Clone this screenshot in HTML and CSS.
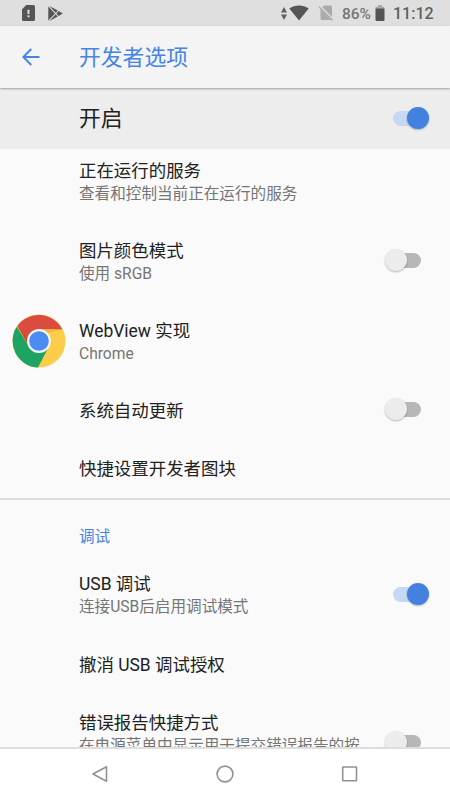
FILE: index.html
```html
<!DOCTYPE html>
<html lang="zh-CN">
<head>
<meta charset="utf-8">
<title>开发者选项</title>
<link rel="stylesheet" href="styles.css">
</head>
<body>
<div class="screen">
  <div class="statusbar">
    <svg class="sd" width="13" height="16" viewBox="0 0 13 16"><path fill="#555" fill-rule="evenodd" d="M4.3 0H11.5Q13 0 13 1.5V14.5Q13 16 11.5 16H1.5Q0 16 0 14.5V4.3ZM5.5 4.8V9H7.5V4.8ZM5.5 10.3V12.2H7.5V10.3Z"/></svg>
    <svg class="play" width="15" height="15" viewBox="0 0 15 15"><path fill="#555" d="M.3.4V14.6L7 7.5ZM1.3 0 7.7 6.8 9.8 4.6ZM1.3 15 7.7 8.2 9.8 10.4ZM10.6 5.1 8.4 7.5 10.6 9.9 14.8 7.5Z"/></svg>
    <span class="grow"></span>
    <svg class="updown" width="6" height="13" viewBox="0 0 6 13"><path fill="#606060" d="M3 0 6 5.5H0ZM3 13 6 7.5H0Z"/></svg>
    <svg class="wifi" width="20" height="16" viewBox="0 0 20 16"><path fill="#555" d="M10 15.5.3 3.5C5.5-.6 14.5-.6 19.7 3.5Z"/></svg>
    <svg class="nosim" width="16" height="16" viewBox="0 0 16 16"><path fill="#aaa" d="M6 .5H12.5Q14 .5 14 2V12L4.3 2.3ZM2.5 4.5 13.1 15H4Q2.5 15 2.5 13.5Z"/><path d="M1 1.7 14.5 15.3" stroke="#aaa" stroke-width="1.4"/></svg>
    <span class="pct">86%</span>
    <svg class="battery" width="10" height="16" viewBox="0 0 10 16"><path fill="#aaa" d="M3 0H7V1.8H9.2V4H.5V1.8H3Z"/><path fill="#555" d="M.5 3.5H9.5V15Q9.5 16 8.5 16H1.5Q.5 16 .5 15Z"/></svg>
    <span class="clock">11:12</span>
  </div>

  <header class="appbar">
    <svg class="back" width="18" height="18" viewBox="0 0 18 18"><path d="M17.5 9H1.6M9.3 1 1.3 9 9.3 17" fill="none" stroke="#4584e4" stroke-width="1.9"/></svg>
    <h1>开发者选项</h1>
  </header>

  <main class="content">
    <div class="master"><span>开启</span><i class="switch on"></i></div>

    <div class="row first"><div class="text"><div class="title">正在运行的服务</div><div class="summary">查看和控制当前正在运行的服务</div></div></div>
    <div class="row"><div class="text"><div class="title">图片颜色模式</div><div class="summary">使用 sRGB</div></div><i class="switch"></i></div>
    <div class="row webview">
      <svg class="chrome" width="54" height="54" viewBox="0 0 54 54">
        <circle cx="27" cy="27" r="26.5" fill="#fccd48"/>
        <path fill="#1da362" d="M27 27 17.2 32.7 4.7 12.8A26.5 26.5 0 0 0 26 53.5L36.8 32.7Z"/>
        <path fill="#db4b3f" d="M5.3 12A26.5 26.5 0 0 1 50.3 15.3H27L17.2 32.7Z"/>
        <path fill="#b83a31" opacity=".25" d="M5.3 12 17.2 32.7 15 24Z"/>
        <path fill="#d99b24" opacity=".35" d="M27 15.3H50.3L36 19Z"/>
        <circle cx="27" cy="27" r="12" fill="#f3f3f3"/>
        <circle cx="27" cy="27" r="9.8" fill="#4b8bf2"/>
      </svg>
      <div class="text"><div class="title">WebView 实现</div><div class="summary">Chrome</div></div>
    </div>
    <div class="row single"><div class="text"><div class="title">系统自动更新</div></div><i class="switch"></i></div>
    <div class="row single"><div class="text"><div class="title">快捷设置开发者图块</div></div></div>

    <div class="category">调试</div>
    <div class="row usb"><div class="text"><div class="title">USB 调试</div><div class="summary">连接USB后启用调试模式</div></div><i class="switch on"></i></div>
    <div class="row single"><div class="text"><div class="title">撤消 USB 调试授权</div></div></div>
    <div class="row last"><div class="text"><div class="title">错误报告快捷方式</div><div class="summary">在电源菜单中显示用于提交错误报告的按</div></div><i class="switch"></i></div>
  </main>

  <nav class="navbar">
    <svg width="18" height="18" viewBox="0 0 18 18"><path d="M15.5 1.7V16.3L2 9Z" fill="none" stroke="#929292" stroke-width="1.6" stroke-linejoin="round"/></svg>
    <svg width="18" height="18" viewBox="0 0 18 18"><circle cx="9" cy="9" r="7.9" fill="none" stroke="#929292" stroke-width="1.6"/></svg>
    <svg width="18" height="18" viewBox="0 0 18 18"><rect x="1.7" y="2" width="13.8" height="13.8" rx=".5" fill="none" stroke="#929292" stroke-width="1.6"/></svg>
  </nav>
</div>
</body>
</html>
```
FILE: styles.css
```css
* { box-sizing: border-box; }

body {
  margin: 0;
  font-family: Roboto, "Noto Sans CJK SC", sans-serif;
  color: #212121;
}

.screen {
  width: 450px;
  height: 800px;
  display: flex;
  flex-direction: column;
  overflow: hidden;
  background: #fafafa;
}

.statusbar {
  flex: none;
  height: 26px;
  padding: 0 18px 0 22px;
  display: flex;
  align-items: center;
  background: #dfdfdf;
  color: #606060;
  font-size: 16px;
  font-weight: 500;
  line-height: 26px;
}
.statusbar svg { flex: none; }
.play { margin-left: 13px; }
.grow { flex: 1; }
.wifi { margin-left: 2px; }
.nosim { margin-left: 9px; }
.pct { margin-left: 8px; width: 29px; font-size: 15.5px; color: #757575; padding-top: 2px; }
.battery { margin-left: 4px; }
.clock { margin-left: 8px; width: 39px; padding-top: 2px; }

.appbar {
  flex: none;
  height: 62px;
  padding-left: 22px;
  display: flex;
  align-items: center;
  position: relative;
  z-index: 1;
  background: #f4f4f4;
  box-shadow: 0 1px 2px rgba(0, 0, 0, .35);
}
.appbar h1 {
  margin: 2px 0 0 39px;
  font-size: 21.8px;
  font-weight: 400;
  line-height: 30px;
  color: #4584e4;
}

.content { flex: 1; min-height: 0; overflow: hidden; }

.master {
  height: 61px;
  padding: 0 29px 0 79px;
  display: flex;
  align-items: center;
  justify-content: space-between;
  background: #ededed;
  font-size: 21.8px;
}
.master span { line-height: 30px; }

.row {
  height: 80px;
  padding: 0 29px 1px 79px;
  display: flex;
  align-items: center;
  justify-content: space-between;
}
.text { padding-top: 3px; }
.row.first { height: 72px; padding-bottom: 8px; }
.row.single { height: 58.5px; }
.row.webview { padding-left: 12px; padding-bottom: 1px; justify-content: flex-start; gap: 13px; }
.row.usb .text { padding-top: 2px; }
.row.last { height: 97px; align-items: flex-start; padding-top: 18px; }
.row.last .text { padding-top: 0; }
.row.last .switch { margin-top: 23px; }

.title { font-size: 17.45px; line-height: 23px; white-space: nowrap; }
.summary { font-size: 15.6px; line-height: 22px; color: #757575; white-space: nowrap; }

.category {
  height: 57px;
  padding: 17px 0 0 79px;
  border-top: 2px solid #dedede;
  font-size: 15.6px;
  line-height: 40px;
  color: #4584e4;
}

.switch {
  flex: none;
  position: relative;
  width: 28px;
  height: 15px;
  border-radius: 8px;
  background: #b7b7b7;
}
.switch::after {
  content: "";
  position: absolute;
  top: -4px;
  left: -8px;
  width: 22px;
  height: 22px;
  border-radius: 50%;
  background: #ececec;
  box-shadow: 0 1px 2px rgba(0, 0, 0, .28);
}
.switch.on { background: #c6d9f4; }
.switch.on::after { left: 14px; background: #4281df; }

.navbar {
  flex: none;
  height: 53px;
  padding: 0 91px 2px;
  display: flex;
  align-items: center;
  justify-content: space-between;
  border-top: 2px solid #dedede;
  background: #fff;
}
```
